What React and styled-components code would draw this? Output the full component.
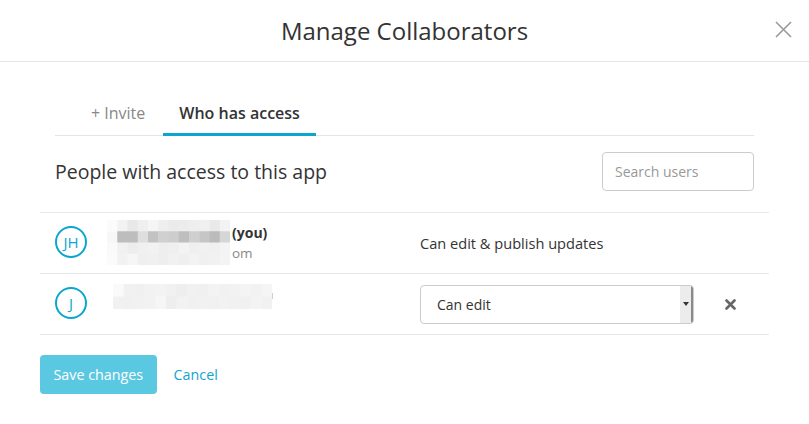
import React from 'react';
import styled, { createGlobalStyle } from 'styled-components';

const GlobalStyle = createGlobalStyle`
  body {
    margin: 0;
    background: #ffffff;
    font-family: "Open Sans", "Liberation Sans", sans-serif;
    color: #333333;
  }
`;

const Modal = styled.div`
  width: 809px;
  height: 424px;
  background: #ffffff;
  overflow: hidden;
`;

const Header = styled.header`
  height: 61px;
  border-bottom: 1px solid #e5e5e5;
  display: flex;
  align-items: center;
  justify-content: center;
  position: relative;
`;

const Title = styled.h1`
  margin: 0;
  font-size: 24px;
  font-weight: 400;
  color: #333333;
`;

const CloseButton = styled.button`
  position: absolute;
  right: 16px;
  top: 19px;
  width: 20px;
  height: 20px;
  padding: 0;
  border: 0;
  background: none;
  cursor: pointer;
  display: flex;
  align-items: center;
  justify-content: center;
`;

const Body = styled.div`
  padding: 30px 40px 0;
`;

const TabList = styled.div`
  display: flex;
  gap: 2px;
  margin: 0 15px;
  padding-left: 20px;
  border-bottom: 1px solid #e5e5e5;
`;

const Tab = styled.div`
  padding: 10px 16px 9px;
  font-size: 16px;
  line-height: 22px;
  font-weight: ${(p) => (p.$active ? 600 : 400)};
  color: ${(p) => (p.$active ? '#333333' : '#888888')};
  border-bottom: 3px solid ${(p) => (p.$active ? '#0aa6cf' : 'transparent')};
  margin-bottom: -1px;
`;

const SectionHead = styled.div`
  display: flex;
  align-items: center;
  justify-content: space-between;
  margin: 0 15px;
  padding: 16px 0 21px;
`;

const SectionTitle = styled.h2`
  margin: 0;
  font-size: 19.5px;
  font-weight: 400;
  color: #333333;
`;

const SearchInput = styled.input`
  width: 152px;
  height: 39px;
  box-sizing: border-box;
  border: 1px solid #cccccc;
  border-radius: 4px;
  padding: 0 12px;
  font-family: inherit;
  font-size: 14px;
  color: #333333;
  &::placeholder {
    color: #999999;
  }
`;

const Table = styled.div`
  border-bottom: 1px solid #e8e8e8;
`;

const Row = styled.div`
  display: grid;
  grid-template-columns: 67px 313px 274px 1fr;
  align-items: center;
  height: 60px;
  border-top: 1px solid #e8e8e8;
`;

const AvatarCell = styled.div`
  padding-left: 15px;
`;

const Avatar = styled.div`
  width: 32px;
  height: 32px;
  box-sizing: border-box;
  border: 2px solid #0aa6cf;
  border-radius: 50%;
  display: flex;
  align-items: center;
  justify-content: center;
  font-size: 15px;
  color: #0aa6cf;
  margin-top: -2px;
`;

const NameCell = styled.div`
  align-self: flex-start;
  padding-top: ${(p) => p.$top}px;
  padding-left: ${(p) => p.$left || 0}px;
  display: flex;
  align-items: flex-start;
`;

const NameLines = styled.div`
  display: flex;
  flex-direction: column;
  padding: 3px 0 0 2px;
  font-size: 14px;
  line-height: 20px;
`;

const You = styled.span`
  font-weight: 700;
  color: #333333;
`;

const Email = styled.span`
  color: #888888;
  font-size: 13.5px;
`;

const Tail = styled.span`
  width: 1px;
  height: 6px;
  margin-top: 9px;
  background: #cfcfcf;
`;

const Permission = styled.div`
  font-size: 14.6px;
  color: #333333;
`;

const SelectBox = styled.div`
  height: 39px;
  box-sizing: border-box;
  border: 1px solid #cccccc;
  border-radius: 4px;
  display: flex;
  align-items: stretch;
  font-size: 14px;
  color: #333333;
  overflow: hidden;
`;

const SelectValue = styled.div`
  flex: 1;
  display: flex;
  align-items: center;
  padding-left: 16px;
`;

const SelectArrow = styled.div`
  width: 11px;
  background: #ececec;
  border-right: 2px solid #8a8a8a;
  display: flex;
  align-items: center;
  justify-content: center;
  &::after {
    content: '';
    border-left: 3px solid transparent;
    border-right: 3px solid transparent;
    border-top: 4px solid #333333;
  }
`;

const RemoveCell = styled.div`
  display: flex;
  justify-content: center;
  padding-right: 3px;
`;

const Footer = styled.div`
  display: flex;
  align-items: center;
  gap: 17px;
  padding-top: 20px;
`;

const SaveButton = styled.button`
  height: 39px;
  padding: 0 13.5px;
  border: 0;
  border-radius: 4px;
  background: #5bc8e1;
  color: #ffffff;
  font-family: inherit;
  font-size: 14.3px;
`;

const CancelLink = styled.a`
  font-size: 14.3px;
  color: #12a4cf;
  text-decoration: none;
`;

// pixelated (redacted) name blocks
const mosaicOne = [
  ['#fbfbfb', '#f2f2f2', '#e8e8e8', '#efefef', '#f5f5f5', '#eeeeee', '#ebebeb', '#ececec', '#eeeeee', '#f0f0f0', '#e9e9e9', '#f3f3f3'],
  ['#f7f7f7', '#bdbdbd', '#bdbdbd', '#dedede', '#c2c2c2', '#d0d0d0', '#cdcdcd', '#bebebe', '#cfcfcf', '#c6c6c6', '#bbbbbb', '#d6d6d6'],
  ['#fafafa', '#f1f1f1', '#ededed', '#f0f0f0', '#f2f2f2', '#eeeeee', '#efefef', '#f3f3f3', '#efefef', '#f1f1f1', '#f0f0f0', '#f4f4f4'],
  ['#fbfbfb', '#f2f2f2', '#f6f6f6', '#efefef', '#f0f0f0', '#eeeeee', '#f1f1f1', '#efefef', '#f3f3f3', '#f0f0f0', '#f1f1f1', '#f4f4f4'],
];

const mosaicTwo = [
  ['#fafafa', '#f1f1f1', '#f0f0f0', '#f2f2f2', '#f3f3f3', '#f1f1f1', '#eeeeee', '#f1f1f1', '#f0f0f0', '#f3f3f3', '#f1f1f1', '#f2f2f2', '#f4f4f4', '#f2f2f2', '#f5f5f5'],
  ['#f1f1f1', '#f0f0f0', '#f1f1f1', '#f2f2f2', '#f6f6f6', '#eeeeee', '#f2f2f2', '#f0f0f0', '#f1f1f1', '#f0f0f0', '#f2f2f2', '#f1f1f1', '#f0f0f0', '#f3f3f3', '#f1f1f1'],
];

const Mosaic = ({ cells, cw, ch }) => (
  <svg width={cells[0].length * cw} height={cells.length * ch} style={{ display: 'block' }}>
    {cells.map((row, r) =>
      row.map((c, i) => <rect key={`${r}-${i}`} x={i * cw} y={r * ch} width={cw + 0.5} height={ch + 0.5} fill={c} />)
    )}
  </svg>
);

const CloseIcon = () => (
  <svg width="17" height="17" viewBox="0 0 17 17">
    <path d="M1 1 L16 16 M16 1 L1 16" stroke="#9a9a9a" strokeWidth="1.6" fill="none" />
  </svg>
);

const RemoveIcon = () => (
  <svg width="11" height="11" viewBox="0 0 11 11">
    <path d="M1.5 1.5 L9.5 9.5 M9.5 1.5 L1.5 9.5" stroke="#666666" strokeWidth="2.6" strokeLinecap="round" fill="none" />
  </svg>
);

const App = () => (
  <>
    <GlobalStyle />
    <Modal>
      <Header>
        <Title>Manage Collaborators</Title>
        <CloseButton aria-label="Close">
          <CloseIcon />
        </CloseButton>
      </Header>
      <Body>
        <TabList>
          <Tab>+ Invite</Tab>
          <Tab $active>Who has access</Tab>
        </TabList>
        <SectionHead>
          <SectionTitle>People with access to this app</SectionTitle>
          <SearchInput placeholder="Search users" />
        </SectionHead>
        <Table>
          <Row>
            <AvatarCell>
              <Avatar>JH</Avatar>
            </AvatarCell>
            <NameCell $top={7}>
              <Mosaic cells={mosaicOne} cw={10.25} ch={11.25} />
              <NameLines>
                <You>(you)</You>
                <Email>om</Email>
              </NameLines>
            </NameCell>
            <Permission>Can edit &amp; publish updates</Permission>
            <div />
          </Row>
          <Row>
            <AvatarCell>
              <Avatar>J</Avatar>
            </AvatarCell>
            <NameCell $top={10} $left={6}>
              <Mosaic cells={mosaicTwo} cw={10.6} ch={12.5} />
              <Tail />
            </NameCell>
            <SelectBox>
              <SelectValue>Can edit</SelectValue>
              <SelectArrow />
            </SelectBox>
            <RemoveCell>
              <RemoveIcon />
            </RemoveCell>
          </Row>
        </Table>
        <Footer>
          <SaveButton>Save changes</SaveButton>
          <CancelLink href="#">Cancel</CancelLink>
        </Footer>
      </Body>
    </Modal>
  </>
);

export default App;
